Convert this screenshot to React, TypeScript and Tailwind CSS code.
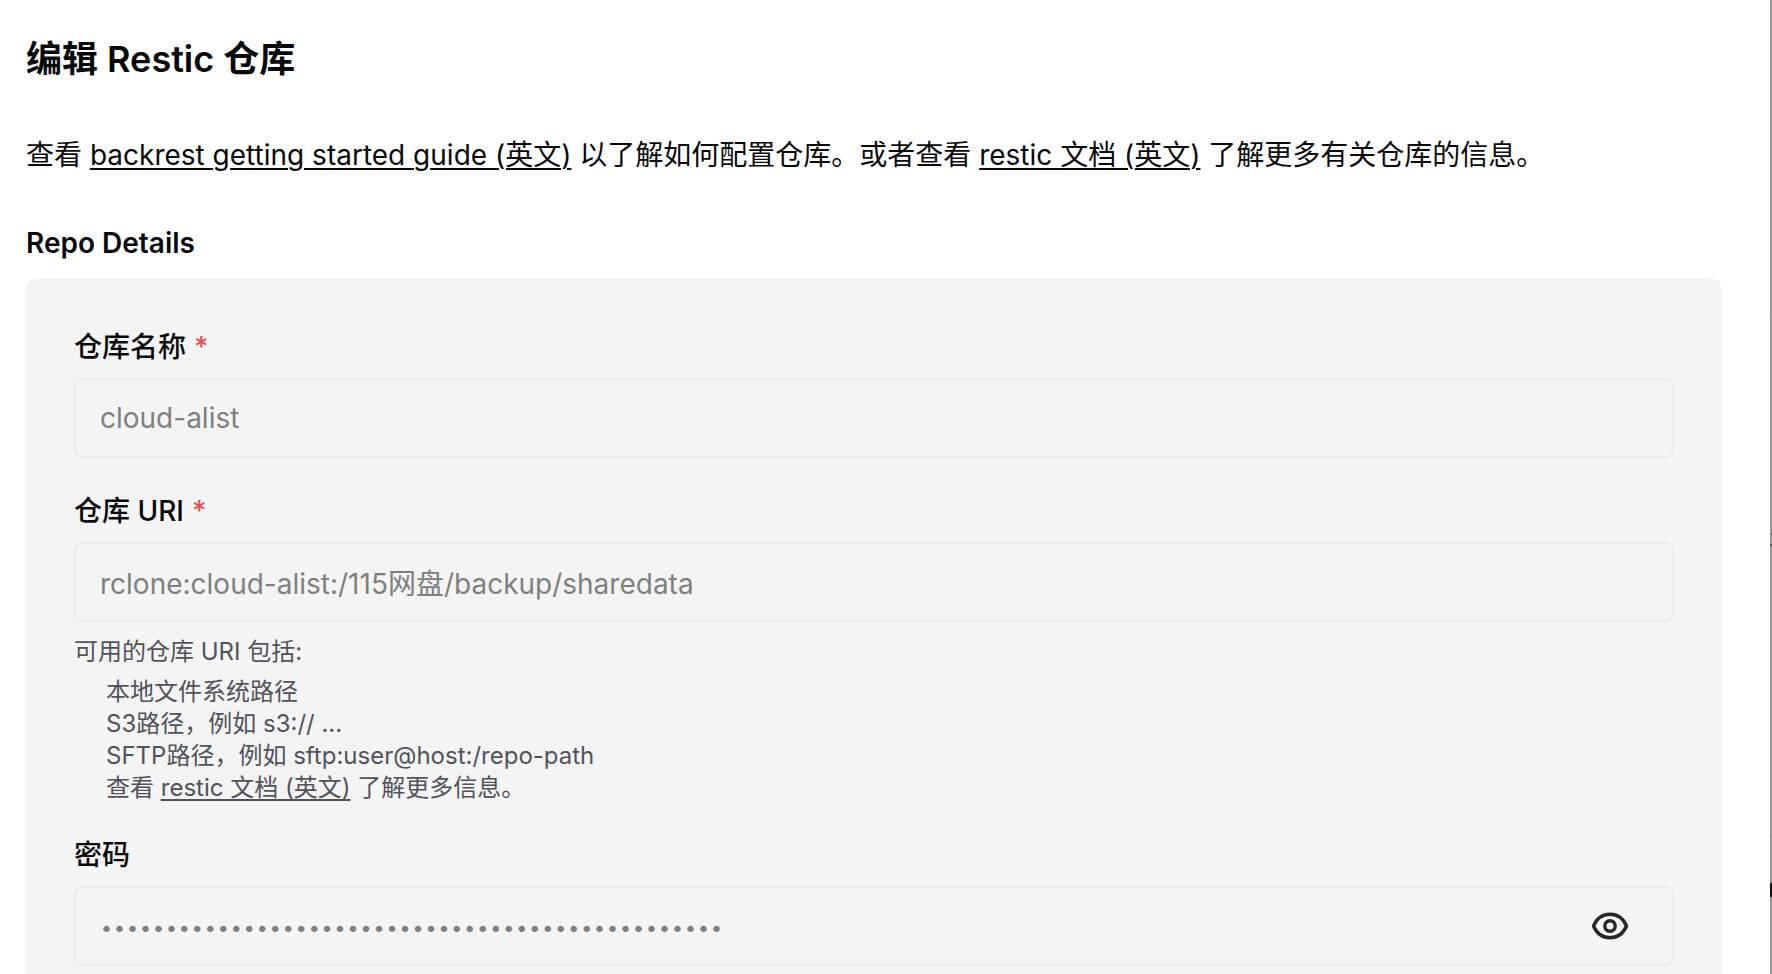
import { useState } from "react";
import type { ReactNode } from "react";

const DOCS_URL = "https://restic.readthedocs.io/en/latest/030_preparing_a_new_repo.html";
const GUIDE_URL = "https://garethgeorge.github.io/backrest/introduction/getting-started";

const inputClass =
  "h-20 w-full rounded-lg border-2 border-[#ebebeb] bg-transparent px-6 text-[28px] text-[#808080] outline-none";

function DocLink({ href, children }: { href: string; children: ReactNode }) {
  return (
    <a href={href} className="underline decoration-2 underline-offset-3">
      {children}
    </a>
  );
}

type FieldProps = {
  id: string;
  label: string;
  required?: boolean;
  children: ReactNode;
};

function Field({ id, label, required, children }: FieldProps) {
  return (
    <div className="flex flex-col gap-2.5">
      <label htmlFor={id} className="flex gap-2 text-[28px] leading-[42px] font-medium">
        {label}
        {required && <span className="text-[#e05252]">*</span>}
      </label>
      {children}
    </div>
  );
}

function EyeIcon() {
  return (
    <svg viewBox="0 0 40 40" fill="none" stroke="currentColor" strokeWidth="3.4" className="size-10">
      <path
        d="M3.5 20C7 12 13 8.300 20 8.300S33 12 36.500 20C33 28 27 31.700 20 31.700S7 28 3.500 20Z"
        strokeLinejoin="round"
      />
      <circle cx="20" cy="20" r="5.200" />
    </svg>
  );
}

// Sliver of the dimmed page that stays visible beside the drawer
function Backdrop() {
  return (
    <div aria-hidden="true" className="relative w-0.5 shrink-0 bg-[#979797]">
      <span className="absolute top-[318px] h-0.5 w-full bg-[#8c8c8c]" />
      <span className="absolute top-[533px] right-0 h-0.5 w-px bg-[#555555]" />
      <span className="absolute top-[544px] h-0.5 w-full bg-[#555555]" />
      <span className="absolute top-[836px] h-0.5 w-full bg-[#8c8c8c]" />
      <span className="absolute top-[883px] h-3.5 w-full bg-[#111111]" />
    </div>
  );
}

export default function App() {
  const [name, setName] = useState("cloud-alist");
  const [uri, setUri] = useState("rclone:cloud-alist:/115网盘/backup/sharedata");
  const [password, setPassword] = useState("x".repeat(48));
  const [visible, setVisible] = useState(false);

  return (
    <div className="flex h-screen overflow-hidden bg-white font-[Inter,'Noto_Sans_CJK_SC',sans-serif] text-[#09090b]">
      <main className="min-w-0 flex-1 pr-12 pl-[26px]">
        <h1 className="pt-[37px] text-4xl leading-11 font-semibold">编辑 Restic 仓库</h1>
        <p className="mt-[54px] text-[28px] leading-10">
          查看 <DocLink href={GUIDE_URL}>backrest getting started guide (英文)</DocLink>{" "}
          以了解如何配置仓库。或者查看 <DocLink href={DOCS_URL}>restic 文档 (英文)</DocLink>{" "}
          了解更多有关仓库的信息。
        </p>

        <h2 className="mt-12 text-[28px] leading-10 font-semibold">Repo Details</h2>
        <form className="mt-[15px] flex flex-col gap-8 rounded-xl bg-[#f4f4f4] p-12">
          <Field id="repo-name" label="仓库名称" required>
            <input
              id="repo-name"
              className={inputClass}
              value={name}
              onChange={(e) => setName(e.target.value)}
            />
          </Field>

          <Field id="repo-uri" label="仓库 URI" required>
            <input
              id="repo-uri"
              className={inputClass}
              value={uri}
              onChange={(e) => setUri(e.target.value)}
            />
            <div className="-mb-0.5 pt-1 text-2xl leading-8 text-[#52525b]">
              <p>可用的仓库 URI 包括:</p>
              <ul className="mt-2 pl-8">
                <li>本地文件系统路径</li>
                <li>S3路径，例如 s3:// ...</li>
                <li>SFTP路径，例如 sftp:user@host:/repo-path</li>
                <li>
                  查看 <DocLink href={DOCS_URL}>restic 文档 (英文)</DocLink> 了解更多信息。
                </li>
              </ul>
            </div>
          </Field>

          <Field id="repo-password" label="密码">
            <div className="flex h-20 items-center rounded-lg border-2 border-[#ebebeb] pr-[42px]">
              <input
                id="repo-password"
                type={visible ? "text" : "password"}
                className="h-full min-w-0 flex-1 bg-transparent pt-1.5 pl-6 font-['DejaVu_Sans',sans-serif] text-[22px] text-[#808080] outline-none"
                value={password}
                onChange={(e) => setPassword(e.target.value)}
              />
              <button
                type="button"
                aria-label="显示密码"
                onClick={() => setVisible((prev) => !prev)}
                className="text-[#27272a]"
              >
                <EyeIcon />
              </button>
            </div>
          </Field>
        </form>
      </main>
      <Backdrop />
    </div>
  );
}
